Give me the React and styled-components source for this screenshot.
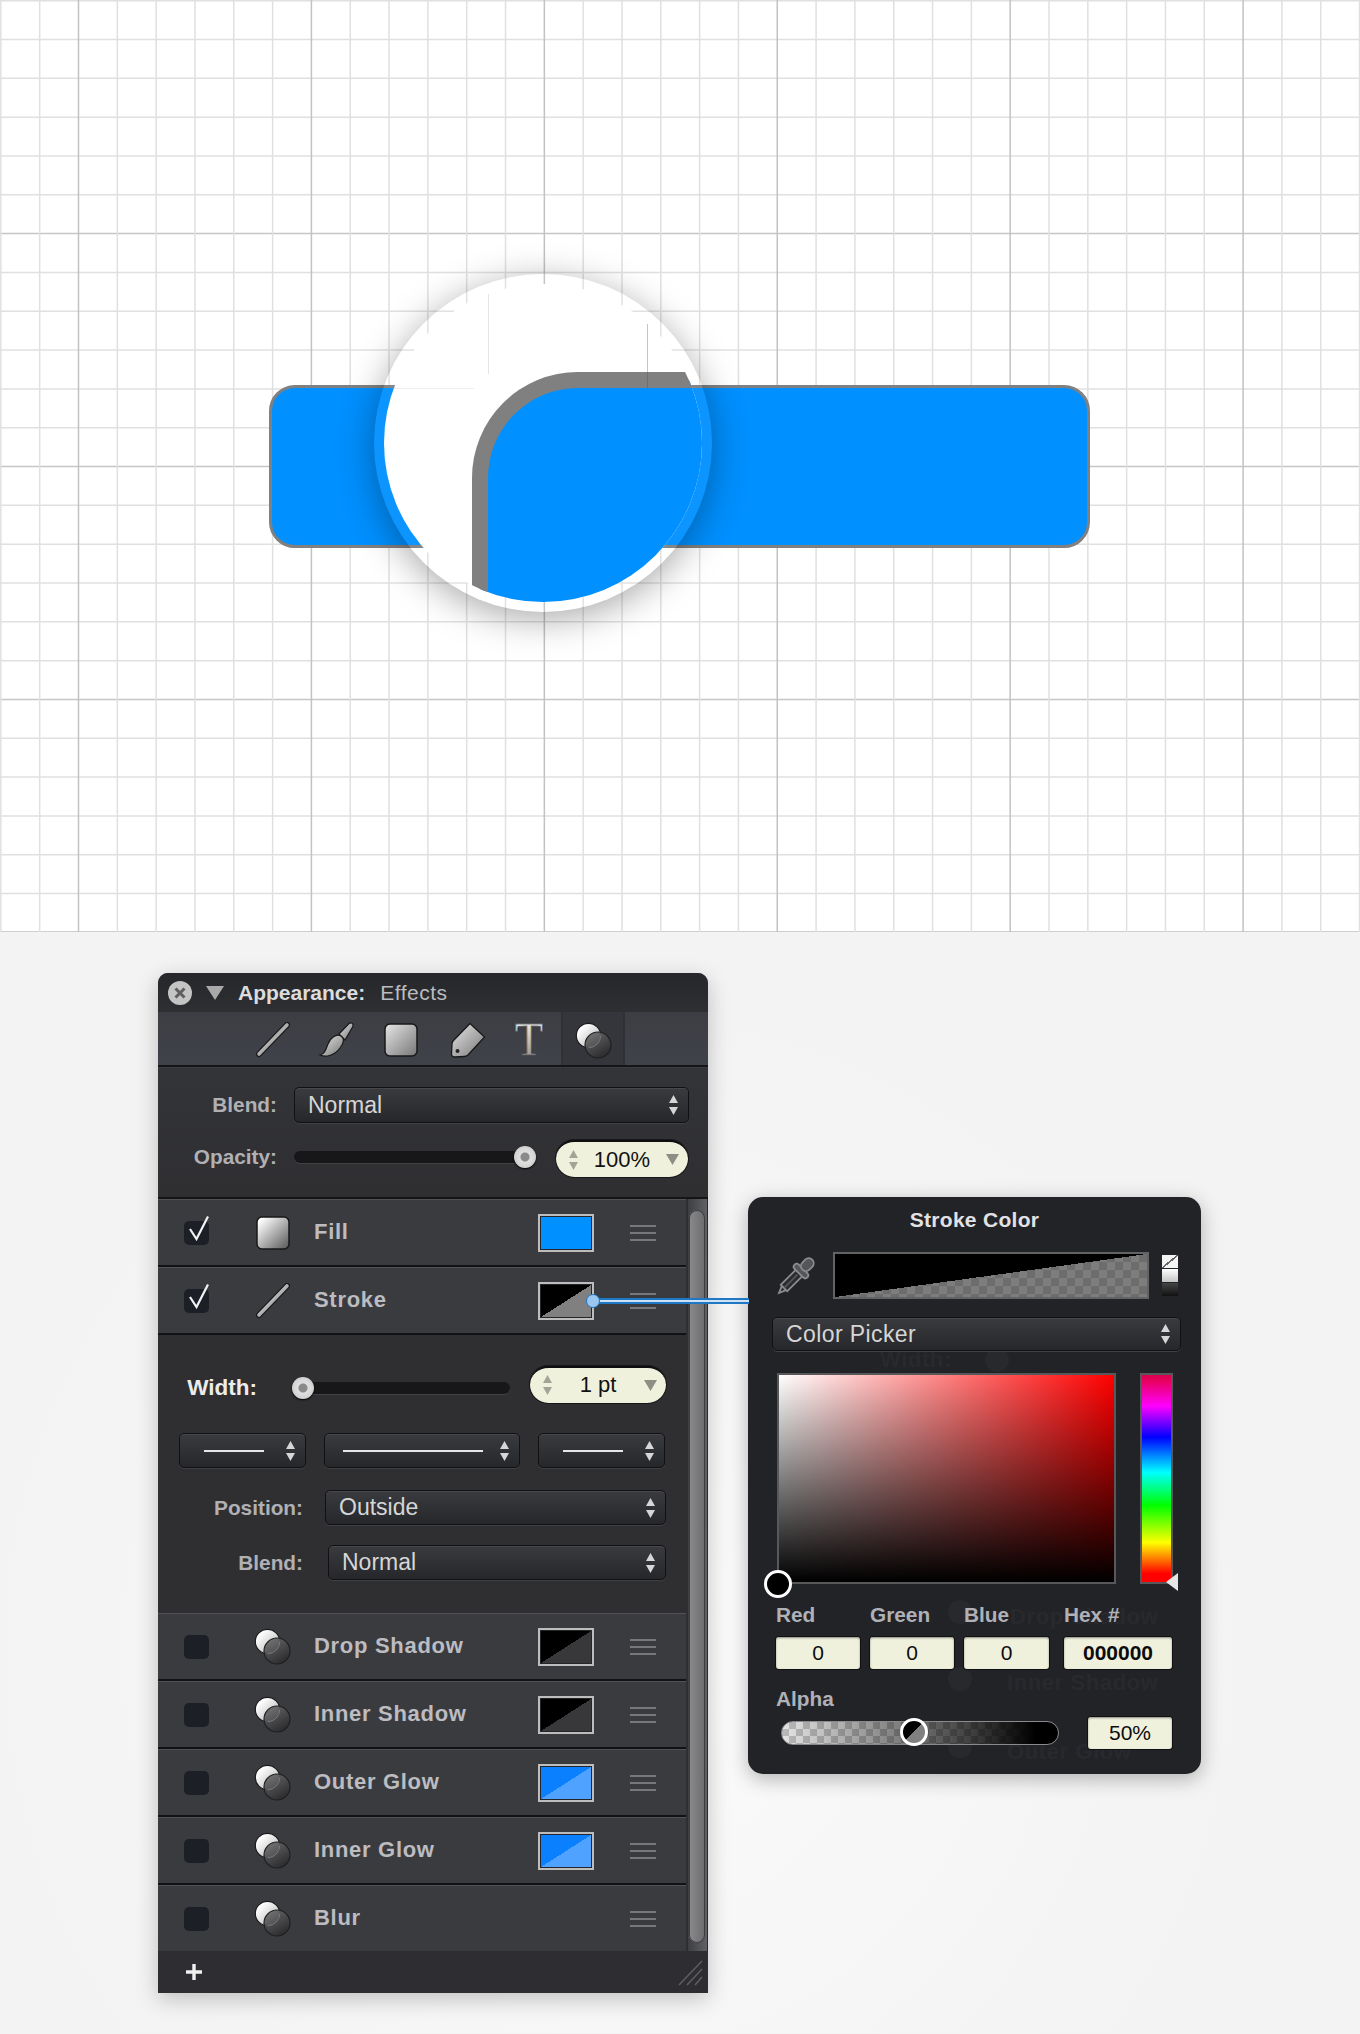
import React from "react";
import styled, { createGlobalStyle } from "styled-components";

const GlobalStyle = createGlobalStyle`
  html, body {
    margin: 0;
    padding: 0;
    background: #f3f3f3;
  }
  body {
    font-family: "Liberation Sans", Arial, sans-serif;
  }
  * {
    box-sizing: border-box;
  }
`;

const Page = styled.div`
  width: 1360px;
  height: 2034px;
  overflow: hidden;
  background: #f3f3f3;
`;

/* ---------- artboard ---------- */

const Canvas = styled.div`
  position: relative;
  height: 932px;
  padding: 385px 0 0 269px;
  background: #fff;
  border-bottom: 1px solid #d2d2d2;
`;

const GridSvg = styled.svg`
  position: absolute;
  top: 0;
  left: 0;
  width: 1360px;
  height: 932px;
`;

const Bar = styled.div`
  position: relative;
  width: 821px;
  height: 163px;
  border-radius: 26px;
  background: #0090ff;
  border: 3px solid #808080;
`;

const Magnifier = styled.div`
  position: absolute;
  left: 374px;
  top: 274px;
  width: 338px;
  height: 338px;
  border-radius: 50%;
  padding: 10px;
  background: rgba(255, 255, 255, 0.05);
  box-shadow: 0 7px 36px rgba(0, 0, 0, 0.34);
`;

const Lens = styled.div`
  position: relative;
  width: 318px;
  height: 318px;
  border-radius: 50%;
  overflow: hidden;
  background: #fff;
`;

const LensLine = styled.div`
  position: absolute;
  left: ${(p) => p.$x}px;
  top: ${(p) => p.$y}px;
  width: ${(p) => p.$w}px;
  height: ${(p) => p.$h}px;
  background: ${(p) => p.$color};
`;

const LensShape = styled.div`
  position: absolute;
  left: 88px;
  top: 88px;
  width: 420px;
  height: 420px;
  background: #0090ff;
  border-left: 16px solid #808080;
  border-top: 16px solid #808080;
  border-top-left-radius: 106px;
`;

/* ---------- lower area ---------- */

const Lower = styled.div`
  height: 1101px;
  padding: 41px 0 0 158px;
  background: radial-gradient(ellipse 620px 640px at 620px 720px, #fbfbfb 0%, #f3f3f3 100%);
`;

const Stage = styled.div`
  position: relative;
  display: flex;
  align-items: flex-start;
`;

/* ---------- appearance panel ---------- */

const Panel = styled.div`
  width: 550px;
  height: 1020px;
  display: flex;
  flex-direction: column;
  border-radius: 10px 10px 0 0;
  overflow: hidden;
  box-shadow: 0 6px 22px rgba(0, 0, 0, 0.22);
  background: #2f2f32;
`;

const TitleBar = styled.div`
  height: 39px;
  flex: none;
  display: flex;
  align-items: center;
  padding-left: 10px;
  background: linear-gradient(#26272a, #2e2f32);
`;

const CloseBtn = styled.div`
  width: 24px;
  height: 24px;
  border-radius: 50%;
  background: #c4c4c4;
  display: flex;
  align-items: center;
  justify-content: center;
`;

const Disclosure = styled.div`
  width: 0;
  height: 0;
  margin-left: 14px;
  border-left: 9px solid transparent;
  border-right: 9px solid transparent;
  border-top: 14px solid #a9a9a9;
`;

const TitleStrong = styled.span`
  margin-left: 14px;
  font-size: 21px;
  font-weight: 700;
  color: #dcdcde;
`;

const TitleLight = styled.span`
  margin-left: 15px;
  font-size: 21px;
  letter-spacing: 0.5px;
  color: #bcbcc0;
`;

const Toolbar = styled.div`
  height: 55px;
  flex: none;
  display: flex;
  padding-left: 83px;
  background: linear-gradient(#3d3e43, #40424a);
  border-bottom: 2px solid #151517;
`;

const Tab = styled.div`
  width: 64px;
  height: 53px;
  padding-top: ${(p) => (p.$active ? 4 : 2)}px;
  display: flex;
  align-items: center;
  justify-content: center;
  background: ${(p) => (p.$active ? "#35363b" : "transparent")};
  box-shadow: ${(p) => (p.$active ? "inset 2px 0 0 #303135, inset -2px 0 0 #303135" : "none")};
`;

const SerifT = styled.span`
  font-family: "Liberation Serif", serif;
  font-size: 46px;
  line-height: 46px;
  background: linear-gradient(#f6f6f6, #8a8a8a);
  -webkit-background-clip: text;
  background-clip: text;
  color: transparent;
  -webkit-text-stroke: 0.5px #1b1b1d;
`;

const TagSlot = styled.div`
  margin-left: 5px;
  display: flex;
`;

const TopSection = styled.div`
  height: 132px;
  flex: none;
  display: flex;
  flex-direction: column;
  gap: 17px;
  padding-top: 19px;
  background: linear-gradient(#333438, #2f2f32);
  border-top: 1px solid #3c3d41;
  border-bottom: 2px solid #151517;
`;

const FormRow = styled.div`
  display: flex;
  align-items: center;
  height: ${(p) => p.$h || 36}px;
  margin-top: ${(p) => p.$mt || 0}px;
`;

const FieldLabel = styled.div`
  width: ${(p) => p.$w}px;
  flex: none;
  text-align: right;
  margin-top: ${(p) => p.$mt || 0}px;
  font-size: ${(p) => p.$size || 20.8}px;
  font-weight: 700;
  color: ${(p) => p.$color || "#b0b0b5"};
`;

const Select = styled.div`
  width: ${(p) => p.$w}px;
  height: ${(p) => p.$h || 35}px;
  margin-left: ${(p) => p.$ml || 0}px;
  margin-top: ${(p) => p.$mt || 0}px;
  flex: none;
  display: flex;
  align-items: center;
  justify-content: space-between;
  padding: 0 10px 0 ${(p) => p.$pl ?? 13}px;
  border-radius: 5px;
  border: 1px solid #111113;
  background: linear-gradient(#3a3b3f, #26272a);
  box-shadow: inset 0 1px 0 #47484c, 0 1px 0 #404145;
  font-size: 23px;
  letter-spacing: ${(p) => p.$ls || 0}px;
  color: #d6d6d6;
`;

const ArrowSvg = styled.svg`
  flex: none;
  display: block;
`;

const SliderTrack = styled.div`
  position: relative;
  width: ${(p) => p.$w}px;
  height: 12px;
  flex: none;
  margin-left: ${(p) => p.$ml}px;
  margin-top: ${(p) => p.$mt || 0}px;
  border-radius: 6px;
  background: #17171a;
  box-shadow: 0 1px 0 #414246;
`;

const SliderThumb = styled.div`
  position: absolute;
  left: ${(p) => p.$left}px;
  top: -5px;
  width: 22px;
  height: 22px;
  border-radius: 50%;
  background: radial-gradient(circle at 50% 50%, #8a8a8a 0 4px, #dcdcdc 5px 7px, #bdbdbd 100%);
  box-shadow: 0 1px 2px #000;
`;

const Stepper = styled.div`
  width: ${(p) => p.$w}px;
  height: 37px;
  margin-left: ${(p) => p.$ml}px;
  flex: none;
  display: flex;
  align-items: center;
  justify-content: space-between;
  padding: 0 9px 0 13px;
  border-radius: 19px;
  background: #f0f1dd;
  border-top: 2px solid #0f0f10;
  box-shadow: 0 0 0 1px #17171a;
  font-size: 22px;
  color: #111;
`;

const ListArea = styled.div`
  flex: 1;
  display: flex;
  min-height: 0;
`;

const List = styled.div`
  width: 528px;
  flex: none;
  display: flex;
  flex-direction: column;
`;

const Row = styled.div`
  height: ${(p) => p.$h || 68}px;
  flex: none;
  display: flex;
  align-items: center;
  padding-left: 26px;
  background: #3a3b3f;
  border-top: 1px solid #515256;
  border-bottom: ${(p) => (p.$last ? "none" : "2px solid #121214")};
`;

const Check = styled.div`
  position: relative;
  width: 25px;
  height: 24px;
  flex: none;
  border-radius: 5px;
  background: #1d1f27;
`;

const CheckMark = styled.svg`
  position: absolute;
  left: 4px;
  top: -6px;
`;

const RowIcon = styled.div`
  width: 37px;
  margin-left: 45px;
  flex: none;
  display: flex;
  align-items: center;
  justify-content: center;
`;

const RowLabel = styled.div`
  flex: 1;
  margin: 0 0 2px 23px;
  font-size: 22px;
  font-weight: 700;
  letter-spacing: 0.7px;
  color: #bcbcc1;
`;

const Swatch = styled.div`
  width: 56px;
  height: 38px;
  flex: none;
  margin-right: 36px;
  border: 2px solid #bdbdbd;
  padding: 1px;
  background: #25262a;
`;

const SwatchFill = styled.div`
  height: 100%;
  background: linear-gradient(to bottom right, ${(p) => p.$a} 50%, ${(p) => p.$b} 50%);
`;

const Burger = styled.div`
  width: 26px;
  height: 16px;
  flex: none;
  margin-right: 30px;
  display: flex;
  flex-direction: column;
  justify-content: space-between;
`;

const BurgerLine = styled.div`
  height: 2px;
  background: #77787c;
`;

const WidthSection = styled.div`
  height: 278px;
  flex: none;
  display: flex;
  flex-direction: column;
  padding-top: 31px;
  background: #2f2f31;
`;

const CapsRow = styled.div`
  display: flex;
  gap: 18px;
  margin: 31px 0 22px 21px;
`;

const CapLine = styled.div`
  width: ${(p) => p.$w}px;
  height: 2px;
  margin-left: ${(p) => p.$ml}px;
  background: #e6e6e6;
`;

const ScrollTrack = styled.div`
  width: 22px;
  flex: none;
  padding: 11px 2px 8px 3px;
  background: linear-gradient(to right, #2f2f31 0 2px, #3e3f42 2px, #606164);
  border-right: 1px solid #2b2b2d;
`;

const ScrollThumb = styled.div`
  height: 100%;
  border-radius: 9px;
  background: linear-gradient(to right, #8a8a8c, #6c6c6e);
  box-shadow: inset 0 0 0 1px #3d3d3f;
`;

const Footer = styled.div`
  height: 42px;
  flex: none;
  display: flex;
  align-items: center;
  justify-content: space-between;
  padding: 0 5px 0 28px;
  background: #2e2e32;
`;

/* ---------- connector ---------- */

const LinkLine = styled.div`
  position: absolute;
  left: 434px;
  top: 325px;
  width: 157px;
  height: 6px;
  background: #cfe3f5;
  border-top: 2px solid #1f78c6;
  border-bottom: 2px solid #1f78c6;
  z-index: 2;
`;

const LinkDot = styled.div`
  position: absolute;
  left: 428px;
  top: 321px;
  width: 14px;
  height: 14px;
  border-radius: 50%;
  background: #9ac6ef;
  border: 1.5px solid #1f78c6;
  z-index: 3;
`;

/* ---------- colour popover ---------- */

const Popover = styled.div`
  position: relative;
  isolation: isolate;
  width: 453px;
  height: 577px;
  margin: 224px 0 0 40px;
  flex: none;
  display: flex;
  flex-direction: column;
  border-radius: 15px;
  background: #222327;
  box-shadow: 0 5px 20px rgba(0, 0, 0, 0.28);
`;

const Ghost = styled.div`
  position: absolute;
  z-index: -1;
  left: ${(p) => p.$x}px;
  top: ${(p) => p.$y}px;
  font-size: 22px;
  line-height: 24px;
  font-weight: 700;
  letter-spacing: 0.6px;
  white-space: nowrap;
  color: #28292d;
`;

const GhostDot = styled.div`
  position: absolute;
  z-index: -1;
  left: ${(p) => p.$x}px;
  top: ${(p) => p.$y}px;
  width: 24px;
  height: 24px;
  border-radius: 50%;
  background: #28292d;
`;

const PopTitle = styled.div`
  height: 46px;
  flex: none;
  display: flex;
  align-items: center;
  justify-content: center;
  font-size: 21px;
  font-weight: 700;
  letter-spacing: 0.3px;
  color: #e2e2e6;
`;

const PreviewRow = styled.div`
  display: flex;
  align-items: center;
  margin-top: 9px;
  padding-left: 28px;
  height: 47px;
`;

const Preview = styled.div`
  width: 316px;
  height: 47px;
  margin-left: 17px;
  flex: none;
  border: 2px solid #636366;
  background:
    linear-gradient(to bottom right, #000 50%, transparent 50%),
    repeating-conic-gradient(#7d7d7d 0 25%, #6d6d6d 0 50%) 0 0 / 16px 16px;
`;

const MiniStack = styled.div`
  width: 16px;
  margin-left: 13px;
  flex: none;
  display: flex;
  flex-direction: column;
  gap: 1px;
`;

const Mini = styled.div`
  height: 13px;
  background: ${(p) => p.$bg};
`;

const FieldRow = styled.div`
  display: flex;
  margin: 22px 0 0 29px;
`;

const Field = styled.div`
  position: relative;
  width: 339px;
  height: 211px;
  flex: none;
  border: 2px solid #58585a;
  background:
    linear-gradient(to top, #000, rgba(0, 0, 0, 0)),
    linear-gradient(to right, #fff, #f00);
`;

const FieldKnob = styled.div`
  position: absolute;
  left: -15px;
  bottom: -16px;
  width: 28px;
  height: 28px;
  border-radius: 50%;
  background: #000;
  border: 3px solid #fff;
`;

const Hue = styled.div`
  position: relative;
  width: 33px;
  height: 211px;
  margin-left: 24px;
  flex: none;
  border: 2px solid #58585a;
  background: linear-gradient(
    #d8004f 0%,
    #e80060 3%,
    #ff00ff 15%,
    #0000ff 30%,
    #00ffff 47%,
    #00ff00 63%,
    #ffff00 81%,
    #ff0000 96%,
    #ff0000 100%
  );
`;

const HueMarker = styled.div`
  position: absolute;
  right: -7px;
  bottom: -9px;
  width: 0;
  height: 0;
  border-top: 9px solid transparent;
  border-bottom: 9px solid transparent;
  border-right: 12px solid #e6e6e6;
`;

const ValuesGrid = styled.div`
  display: grid;
  grid-template-columns: 84px 84px 85px 108px;
  column-gap: 10px;
  margin: 19px 0 0 28px;
`;

const ValueCell = styled.div`
  margin-left: ${(p) => p.$ml || 0}px;
`;

const PopLabel = styled.div`
  height: 24px;
  line-height: 24px;
  font-size: 20.8px;
  font-weight: 700;
  color: #b0b1b7;
`;

const ValueBox = styled.div`
  width: ${(p) => p.$w || "auto"};
  height: 32px;
  margin-top: ${(p) => p.$mt ?? 10}px;
  margin-left: ${(p) => p.$ml || 0}px;
  flex: none;
  display: flex;
  align-items: center;
  justify-content: center;
  border-radius: 3px;
  background: #f0f1dd;
  box-shadow: 0 0 0 1px #111113, inset 0 1px 2px #8c8c80;
  font-size: 21px;
  font-weight: ${(p) => (p.$bold ? 700 : 400)};
  color: #0c0c0c;
`;

const AlphaBlock = styled.div`
  margin: 18px 0 0 28px;
`;

const AlphaRow = styled.div`
  display: flex;
  align-items: center;
  margin-top: 6px;
`;

const AlphaTrack = styled.div`
  position: relative;
  width: 278px;
  height: 24px;
  margin-left: 5px;
  flex: none;
  border-radius: 12px;
  border: 1.5px solid #8a8a8c;
  background:
    linear-gradient(to right, rgba(0, 0, 0, 0.05) 0%, rgba(0, 0, 0, 0.55) 50%, rgba(0, 0, 0, 0.75) 70%, #000 92%),
    repeating-conic-gradient(#c4c4c4 0 25%, #f0f0f0 0 50%) 0 0 / 14px 14px;
`;

const AlphaKnob = styled.div`
  position: absolute;
  left: 118px;
  top: -4px;
  width: 28px;
  height: 28px;
  border-radius: 50%;
  border: 3px solid #fff;
  background: linear-gradient(to bottom right, #000 50%, #808080 50%);
`;

const minorStep = 38.82;
const vLines = Array.from({ length: 36 }, (_, i) => ({ at: 78.5 + (i - 2) * minorStep, major: (i - 2) % 6 === 0 }));
const hLines = Array.from({ length: 25 }, (_, i) => ({ at: 0.7 + i * minorStep, major: i > 0 && i % 6 === 0 }));

function GridLines() {
  return (
    <GridSvg viewBox="0 0 1360 932">
      {hLines.map((l) => (
        <line key={"h" + l.at} x1="0" x2="1360" y1={l.at} y2={l.at} stroke={l.major ? "#c6c6c6" : "#e0e0e0"} strokeWidth="1.5" />
      ))}
      {vLines.map((l) => (
        <line key={"v" + l.at} y1="0" y2="932" x1={l.at} x2={l.at} stroke={l.major ? "#c2c2c2" : "#e0e0e0"} strokeWidth="1.5" />
      ))}
    </GridSvg>
  );
}

function Defs() {
  return (
    <svg width="0" height="0" style={{ position: "absolute" }}>
      <defs>
        <linearGradient id="tabGrad" x1="0" y1="0" x2="1" y2="1">
          <stop offset="0" stopColor="#e6e6e6" />
          <stop offset="1" stopColor="#777" />
        </linearGradient>
        <linearGradient id="whiteGrad" x1="0" y1="0" x2="1" y2="1">
          <stop offset="0.1" stopColor="#fff" />
          <stop offset="1" stopColor="#555" />
        </linearGradient>
        <linearGradient id="ballGrad" x1="0" y1="0" x2="1" y2="1">
          <stop offset="0.2" stopColor="#fff" />
          <stop offset="1" stopColor="#aaa" />
        </linearGradient>
        <linearGradient id="darkBall" x1="0" y1="0" x2="0.6" y2="1">
          <stop offset="0" stopColor="#717173" />
          <stop offset="1" stopColor="#2c2c2e" />
        </linearGradient>
      </defs>
    </svg>
  );
}

function LineIcon({ grad }) {
  return (
    <svg width="36" height="36" viewBox="0 0 36 36">
      <line x1="4" y1="32" x2="32" y2="3" stroke="#18181a" strokeWidth="6" strokeLinecap="round" />
      <line x1="4" y1="32" x2="32" y2="3" stroke={grad} strokeWidth="3.6" strokeLinecap="round" />
    </svg>
  );
}

function BrushIcon() {
  return (
    <svg width="38" height="38" viewBox="0 0 38 38">
      <path d="M21 13 L31 2.5 Q34 1 35 3.5 Q35.5 5 34 7 L27 19 Z" fill="url(#tabGrad)" stroke="#18181a" strokeWidth="1.2" />
      <path d="M2 34 C7 33 8 28 10 23 C12 17 18 13 22 14.5 C27 17 26 22 22 27 C17 34 8 37 2 34 Z" fill="url(#tabGrad)" stroke="#18181a" strokeWidth="1.2" />
    </svg>
  );
}

function SquareIcon({ grad }) {
  return (
    <svg width="34" height="34" viewBox="0 0 34 34">
      <rect x="1" y="1" width="32" height="32" rx="5" fill={grad} stroke="#18181a" strokeWidth="1.5" />
    </svg>
  );
}

function TagIcon() {
  return (
    <svg width="36" height="36" viewBox="0 0 36 36">
      <path d="M20 1.5 L34.5 15 L18 33 Q16.5 34.5 14 34.5 L5 35 Q1.5 35 1.5 32 L2 22 Q2 20 3.5 18.5 Z" fill="url(#tabGrad)" stroke="#18181a" strokeWidth="1.3" />
      <circle cx="7.5" cy="29" r="2" fill="#232326" />
    </svg>
  );
}

function EffectsIcon() {
  return (
    <svg width="37" height="37" viewBox="0 0 37 37">
      <circle cx="13.5" cy="13.5" r="12.2" fill="url(#ballGrad)" stroke="#1b1b1d" strokeWidth="1.2" />
      <circle cx="23" cy="23" r="13" fill="url(#darkBall)" fillOpacity="0.92" stroke="#1f1f21" strokeWidth="1.2" />
      <path d="M13.5 25.7 A12.2 12.2 0 0 0 25.7 13.5" fill="none" stroke="#7c7c7e" strokeWidth="1" />
    </svg>
  );
}

function DropperIcon() {
  return (
    <svg width="40" height="40" viewBox="0 0 40 40">
      <g transform="rotate(45 20 20)" stroke="#8c8c90" strokeWidth="1.8">
        <path d="M17 37 L20 44 L23 37" fill="#2a2b2f" />
        <rect x="15.5" y="15" width="9" height="22" fill="#2a2b2f" />
        <line x1="20" y1="18" x2="20" y2="36" stroke="#55565a" />
        <rect x="11" y="10" width="18" height="6" rx="3" fill="#55565a" />
        <rect x="15" y="-3" width="10" height="14" rx="5" fill="#55565a" />
      </g>
    </svg>
  );
}

function UpDown({ color = "#d6d6d6" }) {
  return (
    <ArrowSvg width="9" height="20" viewBox="0 0 9 20">
      <path d="M4.5 0 L9 8 H0 Z M0 12 H9 L4.5 20 Z" fill={color} />
    </ArrowSvg>
  );
}

function StepperBox({ w, ml, children }) {
  return (
    <Stepper $w={w} $ml={ml}>
      <UpDown color="#a3a398" />
      <span>{children}</span>
      <ArrowSvg width="13" height="11" viewBox="0 0 13 11">
        <path d="M0 0 H13 L6.5 11 Z" fill="#8e8e85" />
      </ArrowSvg>
    </Stepper>
  );
}

function EffectRow({ name, checked, icon, swatch, last, h }) {
  return (
    <Row $last={last} $h={h}>
      <Check>
        {checked && (
          <CheckMark width="22" height="26" viewBox="0 0 22 26">
            <path d="M2 14 L8.5 24 L20 1.5" fill="none" stroke="#f2f2f2" strokeWidth="2.2" />
          </CheckMark>
        )}
      </Check>
      <RowIcon>{icon}</RowIcon>
      <RowLabel>{name}</RowLabel>
      {swatch && (
        <Swatch>
          <SwatchFill $a={swatch[0]} $b={swatch[1]} />
        </Swatch>
      )}
      <Burger>
        <BurgerLine />
        <BurgerLine />
        <BurgerLine />
      </Burger>
    </Row>
  );
}

const effects = [
  { name: "Drop Shadow", swatch: ["#000", "#38383a"], h: 68 },
  { name: "Inner Shadow", swatch: ["#000", "#38383a"] },
  { name: "Outer Glow", swatch: ["#0a80ff", "#4fa2ff"] },
  { name: "Inner Glow", swatch: ["#0a80ff", "#4fa2ff"] },
  { name: "Blur", last: true, h: 66 },
];

const values = [
  { label: "Red", value: "0" },
  { label: "Green", value: "0" },
  { label: "Blue", value: "0" },
  { label: "Hex #", value: "000000", bold: true, ml: 5, w: "108px" },
];

export default function App() {
  return (
    <Page>
      <GlobalStyle />
      <Defs />
      <Canvas>
        <GridLines />
        <Bar />
        <Magnifier>
          <Lens>
            <LensLine $x={104} $y={10} $w={1} $h={80} $color="#e6e6e6" />
            <LensLine $x={263} $y={40} $w={1} $h={50} $color="#c6c6c6" />
            <LensLine $x={0} $y={104} $w={90} $h={1} $color="#eeeeee" />
            <LensShape />
            <LensLine $x={263} $y={88} $w={1} $h={16} $color="#6f6f6f" />
          </Lens>
        </Magnifier>
      </Canvas>

      <Lower>
        <Stage>
          <Panel>
            <TitleBar>
              <CloseBtn>
                <svg width="14" height="14" viewBox="0 0 14 14">
                  <path d="M2.5 2.5 L11.5 11.5 M11.5 2.5 L2.5 11.5" stroke="#5e5e5e" strokeWidth="3" />
                </svg>
              </CloseBtn>
              <Disclosure />
              <TitleStrong>Appearance:</TitleStrong>
              <TitleLight>Effects</TitleLight>
            </TitleBar>

            <Toolbar>
              <Tab><LineIcon grad="url(#tabGrad)" /></Tab>
              <Tab><BrushIcon /></Tab>
              <Tab><SquareIcon grad="url(#tabGrad)" /></Tab>
              <Tab><TagSlot><TagIcon /></TagSlot></Tab>
              <Tab><SerifT>T</SerifT></Tab>
              <Tab $active><EffectsIcon /></Tab>
            </Toolbar>

            <TopSection>
              <FormRow>
                <FieldLabel $w={119}>Blend:</FieldLabel>
                <Select $w={395} $h={36} $ml={17}>
                  Normal
                  <UpDown />
                </Select>
              </FormRow>
              <FormRow $h={37}>
                <FieldLabel $w={119} $mt={-3}>Opacity:</FieldLabel>
                <SliderTrack $w={236} $ml={17} $mt={-3}>
                  <SliderThumb $left={220} />
                </SliderTrack>
                <StepperBox w={132} ml={26}>100%</StepperBox>
              </FormRow>
            </TopSection>

            <ListArea>
              <List>
                <EffectRow
                  name="Fill"
                  checked
                  icon={<SquareIcon grad="url(#whiteGrad)" />}
                  swatch={["#0090ff", "#0090ff"]}
                />
                <EffectRow
                  name="Stroke"
                  checked
                  icon={<LineIcon grad="url(#whiteGrad)" />}
                  swatch={["#000", "#808080"]}
                />

                <WidthSection>
                  <FormRow>
                    <FieldLabel $w={99} $mt={8} $size={22.5} $color="#ececec">Width:</FieldLabel>
                    <SliderTrack $w={218} $ml={35} $mt={8}>
                      <SliderThumb $left={0} />
                    </SliderTrack>
                    <StepperBox w={136} ml={20}>1 pt</StepperBox>
                  </FormRow>
                  <CapsRow>
                    <Select $w={127} $pl={0}>
                      <CapLine $w={60} $ml={24} />
                      <UpDown />
                    </Select>
                    <Select $w={196} $pl={0}>
                      <CapLine $w={140} $ml={18} />
                      <UpDown />
                    </Select>
                    <Select $w={127} $pl={0}>
                      <CapLine $w={60} $ml={24} />
                      <UpDown />
                    </Select>
                  </CapsRow>
                  <FormRow $h={35}>
                    <FieldLabel $w={145}>Position:</FieldLabel>
                    <Select $w={341} $ml={22}>
                      Outside
                      <UpDown />
                    </Select>
                  </FormRow>
                  <FormRow $h={35} $mt={20}>
                    <FieldLabel $w={145}>Blend:</FieldLabel>
                    <Select $w={338} $ml={25}>
                      Normal
                      <UpDown />
                    </Select>
                  </FormRow>
                </WidthSection>

                {effects.map((e) => (
                  <EffectRow key={e.name} name={e.name} swatch={e.swatch} last={e.last} h={e.h} icon={<EffectsIcon />} />
                ))}
              </List>
              <ScrollTrack>
                <ScrollThumb />
              </ScrollTrack>
            </ListArea>

            <Footer>
              <svg width="16" height="16" viewBox="0 0 16 16">
                <path d="M8 0 V16 M0 8 H16" stroke="#f0f0f0" strokeWidth="3.4" />
              </svg>
              <svg width="26" height="28" viewBox="0 0 26 28">
                <path d="M2 27 L25 3 M10 27 L25 11 M18 27 L25 19" stroke="#5c5d61" strokeWidth="1.6" />
              </svg>
            </Footer>
          </Panel>

          <LinkLine />
          <LinkDot />

          <Popover>
            <Ghost $x={132} $y={151}>Width:</Ghost>
            <Ghost $x={262} $y={408}>Drop Shadow</Ghost>
            <Ghost $x={259} $y={474}>Inner Shadow</Ghost>
            <Ghost $x={259} $y={543}>Outer Glow</Ghost>
            <GhostDot $x={237} $y={151} />
            <GhostDot $x={200} $y={403} />
            <GhostDot $x={200} $y={470} />
            <GhostDot $x={200} $y={537} />

            <PopTitle>Stroke Color</PopTitle>
            <PreviewRow>
              <DropperIcon />
              <Preview />
              <MiniStack>
                <Mini $bg="linear-gradient(to bottom right, #f4f4f4 46%, #666 46% 54%, #f4f4f4 54%)" />
                <Mini $bg="linear-gradient(#fff, #c4c4c4)" />
                <Mini $bg="linear-gradient(#444, #111)" />
              </MiniStack>
            </PreviewRow>

            <Select $w={409} $h={34} $ml={24} $mt={18} $ls={0.4}>
              Color Picker
              <UpDown />
            </Select>

            <FieldRow>
              <Field>
                <FieldKnob />
              </Field>
              <Hue>
                <HueMarker />
              </Hue>
            </FieldRow>

            <ValuesGrid>
              {values.map((v) => (
                <ValueCell key={v.label} $ml={v.ml}>
                  <PopLabel>{v.label}</PopLabel>
                  <ValueBox $bold={v.bold} $w={v.w}>{v.value}</ValueBox>
                </ValueCell>
              ))}
            </ValuesGrid>

            <AlphaBlock>
              <PopLabel>Alpha</PopLabel>
              <AlphaRow>
                <AlphaTrack>
                  <AlphaKnob />
                </AlphaTrack>
                <ValueBox $w="84px" $mt={0} $ml={29}>50%</ValueBox>
              </AlphaRow>
            </AlphaBlock>
          </Popover>
        </Stage>
      </Lower>
    </Page>
  );
}
